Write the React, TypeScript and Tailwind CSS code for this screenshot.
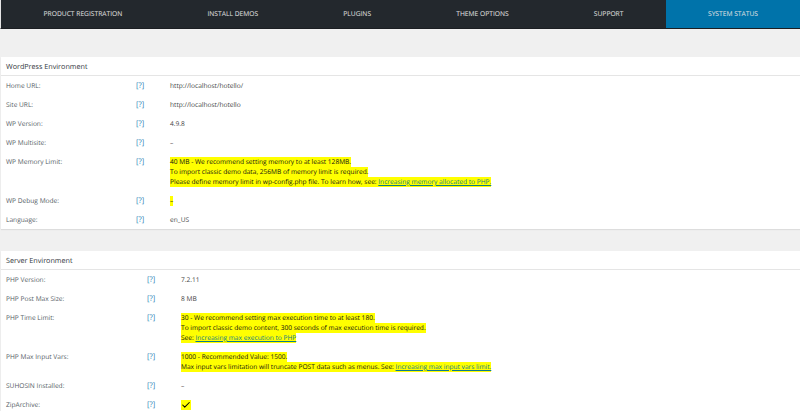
import React from 'react';
import { Check } from 'lucide-react';

const tabs = ['Product Registration', 'Install Demos', 'Plugins', 'Theme Options', 'Support', 'System Status'];

const Mark = ({ children }: { children: React.ReactNode }) => (
  <span className="inline-block h-[10px] bg-[#ffff00] text-[#111]">{children}</span>
);

const Link = ({ children }: { children: React.ReactNode }) => (
  <span className="text-[#0a7a8c] underline">{children}</span>
);

const Row = ({ label, wide, children }: { label: string; wide?: boolean; children: React.ReactNode }) => (
  <div className="flex pt-[5px] pb-[4px] pl-[5px] leading-[10px]">
    <div className={`shrink-0 text-[#555d66] ${wide ? 'w-[141px]' : 'w-[130px]'}`}>{label}</div>
    <div className="shrink-0 text-[#2b86b8] text-[7.6px] w-[34px]">[?]</div>
    <div className="text-[#444]">{children}</div>
  </div>
);

const Section = ({ title, children }: { title: string; children: React.ReactNode }) => (
  <div className="bg-white ml-px shadow-[0_1px_1px_rgba(0,0,0,0.08)]">
    <div className="h-[18px] leading-[20px] pl-[5px] text-[#32373c] text-[7.2px] border-b border-[#e5e5e5] box-content">{title}</div>
    {children}
  </div>
);

export default function App() {
  return (
    <div className="w-[800px] h-[411px] overflow-hidden bg-[#f0f0f0] text-[6.6px] [text-rendering:geometricPrecision] font-['Open_Sans','Noto_Sans',sans-serif]">
      <div className="flex h-[29px] bg-[#23282d] border-l border-b border-l-[#e5e5e5] border-b-[#1b1e22]">
        {tabs.map((t) => (
          <div
            key={t}
            className={`flex-auto flex items-center justify-center uppercase text-[6.7px] text-[#e4e4e4] ${t === 'System Status' ? 'bg-[#0073aa] w-[134px] flex-none' : ''}`}
          >
            {t}
          </div>
        ))}
      </div>

      <div className="h-[28px]" />

      <Section title="WordPress Environment">
        <Row label="Home URL:">http://localhost/hotello/</Row>
        <Row label="Site URL:">http://localhost/hotello</Row>
        <Row label="WP Version:">4.9.8</Row>
        <Row label="WP Multisite:">–</Row>
        <Row label="WP Memory Limit:">
          <Mark>40 MB - We recommend setting memory to at least 128MB.</Mark>
          <br />
          <Mark>To import classic demo data, 256MB of memory limit is required.</Mark>
          <br />
          <Mark>
            Please define memory limit in wp-config.php file. To learn how, see: <Link>Increasing memory allocated to PHP.</Link>
          </Mark>
        </Row>
        <Row label="WP Debug Mode:"><Mark>–</Mark></Row>
        <Row label="Language:">en_US</Row>
      </Section>

      <div className="h-[22px]" />

      <Section title="Server Environment">
        <Row wide label="PHP Version:">7.2.11</Row>
        <Row wide label="PHP Post Max Size:">8 MB</Row>
        <Row wide label="PHP Time Limit:">
          <Mark>30 - We recommend setting max execution time to at least 180.</Mark>
          <br />
          <Mark>To import classic demo content, 300 seconds of max execution time is required.</Mark>
          <br />
          <Mark>See: <Link>Increasing max execution to PHP</Link></Mark>
        </Row>
        <Row wide label="PHP Max Input Vars:">
          <Mark>1000 - Recommended Value: 1500.</Mark>
          <br />
          <Mark>
            Max input vars limitation will truncate POST data such as menus. See: <Link>Increasing max input vars limit.</Link>
          </Mark>
        </Row>
        <Row wide label="SUHOSIN Installed:">–</Row>
        <Row wide label="ZipArchive:">
          <Mark><Check size={10} strokeWidth={2.5} className="text-black" /></Mark>
        </Row>
      </Section>
    </div>
  );
}
